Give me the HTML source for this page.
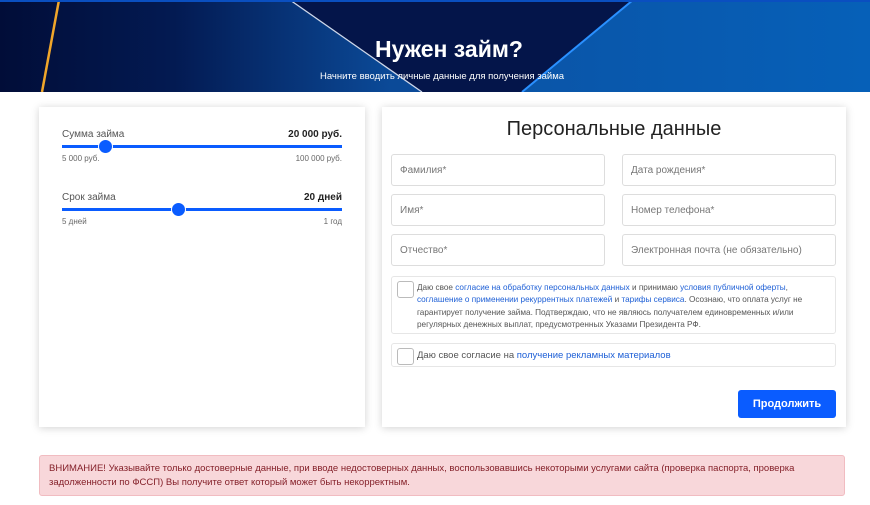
<!DOCTYPE html>
<html><head><meta charset="utf-8"><style>
*{box-sizing:border-box;margin:0;padding:0}
body{width:870px;height:505px;background:#fff;font-family:"Liberation Sans","DejaVu Sans",sans-serif;position:relative;overflow:hidden;color:#333}
.ban{position:absolute;left:0;top:0;width:870px;height:92px;overflow:hidden}
.card{position:absolute;background:#fff;box-shadow:0 1px 8px rgba(0,0,0,.18)}
.lbl{position:absolute;font-size:10px;color:#555}
.val{position:absolute;font-size:10px;font-weight:bold;color:#222;text-align:right}
.small{position:absolute;font-size:8px;color:#666}
.track{position:absolute;height:3px;background:#0a5cff}
.knob{position:absolute;width:15px;height:15px;border-radius:50%;background:#0a5cff;border:1px solid #fff}
.in{position:absolute;width:214px;height:32px;border:1px solid #ddd;border-radius:3px;font-size:10px;color:#777;padding:10px 8px}
.box{position:absolute;border:1px solid #e6e6e6;border-radius:3px}
.cb{position:absolute;width:17px;height:17px;border:1px solid #bbb;border-radius:3px}
a{color:#1d5fd6;text-decoration:none}
</style></head><body>
<div class="ban">
<svg width="870" height="92" style="position:absolute;left:0;top:0">
<defs><linearGradient id="g" x1="0" x2="1"><stop offset="0" stop-color="#0a55a8"/><stop offset="1" stop-color="#0660b8"/></linearGradient>
<linearGradient id="g2" x1="0" x2="1"><stop offset="0" stop-color="#010d38"/><stop offset="0.2" stop-color="#031a52"/><stop offset="0.45" stop-color="#0b4a98"/></linearGradient></defs>
<rect x="0" y="0" width="870" height="92" fill="url(#g2)"/>
<polygon points="290,0 633,0 522,92 422,92" fill="#04154a"/>
<polygon points="633,0 870,0 870,92 522,92" fill="url(#g)"/>
<line x1="633" y1="0" x2="522" y2="92" stroke="#2a90ff" stroke-width="2"/>
<line x1="290" y1="0" x2="422" y2="92" stroke="#cfd8ea" stroke-width="1.3"/>
<line x1="59" y1="0" x2="42" y2="92" stroke="#f1a62a" stroke-width="2.5"/>
<rect x="0" y="0" width="870" height="2" fill="#0a4fc0"/>
</svg>
<div style="position:absolute;left:0;width:898px;top:36px;text-align:center;color:#fff;font-size:23px;font-weight:bold">Нужен займ?</div>
<div style="position:absolute;left:0;width:884px;top:71px;text-align:center;color:#fff;font-size:9.5px">Начните вводить личные данные для получения займа</div>
</div>

<div class="card" style="left:39px;top:107px;width:326px;height:320px">
<div class="lbl" style="left:23px;top:22px">Сумма займа</div>
<div class="val" style="right:23px;top:22px">20 000 руб.</div>
<div class="track" style="left:23px;top:38px;width:280px"></div>
<div class="knob" style="left:59px;top:32px"></div>
<div class="small" style="left:23px;top:47px">5 000 руб.</div>
<div class="small" style="right:23px;top:47px">100 000 руб.</div>
<div class="lbl" style="left:23px;top:85px">Срок займа</div>
<div class="val" style="right:23px;top:85px">20 дней</div>
<div class="track" style="left:23px;top:101px;width:280px"></div>
<div class="knob" style="left:132px;top:95px"></div>
<div class="small" style="left:23px;top:110px">5 дней</div>
<div class="small" style="right:23px;top:110px">1 год</div>
</div>

<div class="card" style="left:382px;top:107px;width:464px;height:320px">
<div style="position:absolute;left:0;width:464px;top:11px;text-align:center;font-size:20px;color:#222">Персональные данные</div>
<div class="in" style="left:9px;top:47px">Фамилия*</div>
<div class="in" style="left:240px;top:47px">Дата рождения*</div>
<div class="in" style="left:9px;top:87px">Имя*</div>
<div class="in" style="left:240px;top:87px">Номер телефона*</div>
<div class="in" style="left:9px;top:127px">Отчество*</div>
<div class="in" style="left:240px;top:127px">Электронная почта (не обязательно)</div>
<div class="box" style="left:9px;top:169px;width:445px;height:58px">
<div class="cb" style="left:5px;top:4px"></div>
<div style="position:absolute;left:25px;top:5px;width:415px;font-size:8.2px;line-height:12.3px;color:#555">Даю свое <a>согласие на обработку персональных данных</a> и принимаю <a>условия публичной оферты</a>, <a>соглашение о применении рекуррентных платежей</a> и <a>тарифы сервиса</a>. Осознаю, что оплата услуг не гарантирует получение займа. Подтверждаю, что не являюсь получателем единовременных и/или регулярных денежных выплат, предусмотренных Указами Президента РФ.</div>
</div>
<div class="box" style="left:9px;top:236px;width:445px;height:24px">
<div class="cb" style="left:5px;top:4px"></div>
<div style="position:absolute;left:25px;top:6px;font-size:9.5px;color:#555">Даю свое согласие на <a>получение рекламных материалов</a></div>
</div>
<div style="position:absolute;left:356px;top:283px;width:98px;height:28px;background:#0a5cff;border-radius:3px;color:#fff;font-size:11px;font-weight:bold;text-align:center;line-height:28px">Продолжить</div>
</div>

<div style="position:absolute;left:39px;top:455px;width:806px;height:41px;background:#f8d7da;border:1px solid #f1bcc1;border-radius:3px;color:#842029;font-size:9.5px;line-height:14px;padding:6px 9px">ВНИМАНИЕ! Указывайте только достоверные данные, при вводе недостоверных данных, воспользовавшись некоторыми услугами сайта (проверка паспорта, проверка задолженности по ФССП) Вы получите ответ который может быть некорректным.</div>
</body></html>
